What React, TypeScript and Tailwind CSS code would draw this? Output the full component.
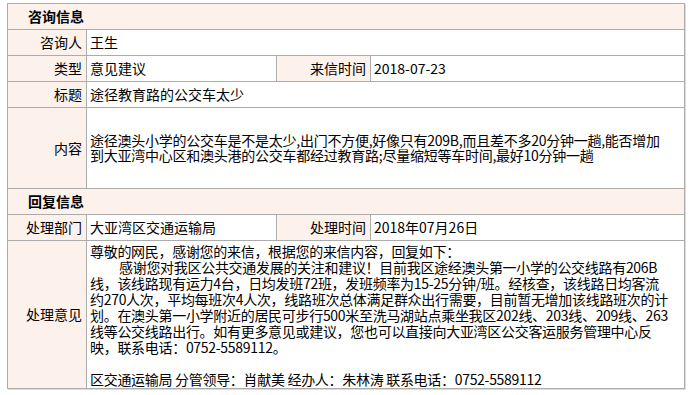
import React from "react";

const font = { fontFamily: '"Noto Sans CJK SC", "Liberation Sans", sans-serif' };

const labelCls = "bg-[#fdf1ec] border border-[#acacac] text-right pr-[4px] align-middle";
const valueCls = "border border-[#acacac] pl-[3px] align-middle";

const replyLines = [
  "尊敬的网民，感谢您的来信，根据您的来信内容，回复如下：",
  "感谢您对我区公共交通发展的关注和建议！目前我区途经澳头第一小学的公交线路有206B",
  "线，该线路现有运力4台，日均发班72班，发班频率为15-25分钟/班。经核查，该线路日均客流",
  "约270人次，平均每班次4人次，线路班次总体满足群众出行需要，目前暂无增加该线路班次的计",
  "划。在澳头第一小学附近的居民可步行500米至洗马湖站点乘坐我区202线、203线、209线、263",
  "线等公交线路出行。如有更多意见或建议，您也可以直接向大亚湾区公交客运服务管理中心反",
  "映，联系电话：0752-5589112。",
];

const App = () => {
  return (
    <div className="min-h-screen bg-white pl-[7px] pt-[3px] text-[14px] text-black" style={font}>
      <table className="w-[677px] table-fixed border-collapse border border-[#a0a0a0] shadow-[1px_1px_0_#dcdcdc]">
        <colgroup>
          <col className="w-[79px]" />
          <col className="w-[190px]" />
          <col className="w-[94px]" />
          <col className="w-[314px]" />
        </colgroup>
        <tbody>
          <tr className="h-[26px]">
            <td colSpan={4} className="bg-[#fdf1ec] border border-[#acacac] pl-[20px] font-bold">
              咨询信息
            </td>
          </tr>
          <tr className="h-[26px]">
            <td className={labelCls}>咨询人</td>
            <td colSpan={3} className={valueCls}>王生</td>
          </tr>
          <tr className="h-[26px]">
            <td className={labelCls}>类型</td>
            <td className={valueCls}>意见建议</td>
            <td className={labelCls}>来信时间</td>
            <td className={valueCls}>2018-07-23</td>
          </tr>
          <tr className="h-[26px]">
            <td className={labelCls}>标题</td>
            <td colSpan={3} className={valueCls}>途径教育路的公交车太少</td>
          </tr>
          <tr className="h-[81px]">
            <td className={labelCls}>内容</td>
            <td colSpan={3} className={valueCls + " leading-[15px] tracking-[-0.25px]"}>
              <div className="whitespace-nowrap">
                途径澳头小学的公交车是不是太少,出门不方便,好像只有209B,而且差不多20分钟一趟,能否增加
              </div>
              <div className="whitespace-nowrap">
                到大亚湾中心区和澳头港的公交车都经过教育路;尽量缩短等车时间,最好10分钟一趟
              </div>
            </td>
          </tr>
          <tr className="h-[26px]">
            <td colSpan={4} className="bg-[#fdf1ec] border border-[#acacac] pl-[20px] font-bold">
              回复信息
            </td>
          </tr>
          <tr className="h-[26px]">
            <td className={labelCls}>处理部门</td>
            <td className={valueCls}>大亚湾区交通运输局</td>
            <td className={labelCls}>处理时间</td>
            <td className={valueCls}>2018年07月26日</td>
          </tr>
          <tr className="h-[148px]">
            <td className={labelCls}>处理意见</td>
            <td colSpan={3} className={valueCls + " leading-[16px] tracking-[-0.3px]"}>
              {replyLines.map((line, i) => (
                <div key={i} className={"whitespace-nowrap" + (i === 1 ? " pl-[29px]" : "")}>
                  {line}
                </div>
              ))}
              <div className="h-[16px]" />
              <div className="whitespace-nowrap">
                区交通运输局 分管领导：肖献美 经办人：朱林涛 联系电话：0752-5589112
              </div>
            </td>
          </tr>
        </tbody>
      </table>
    </div>
  );
};

export default App;
